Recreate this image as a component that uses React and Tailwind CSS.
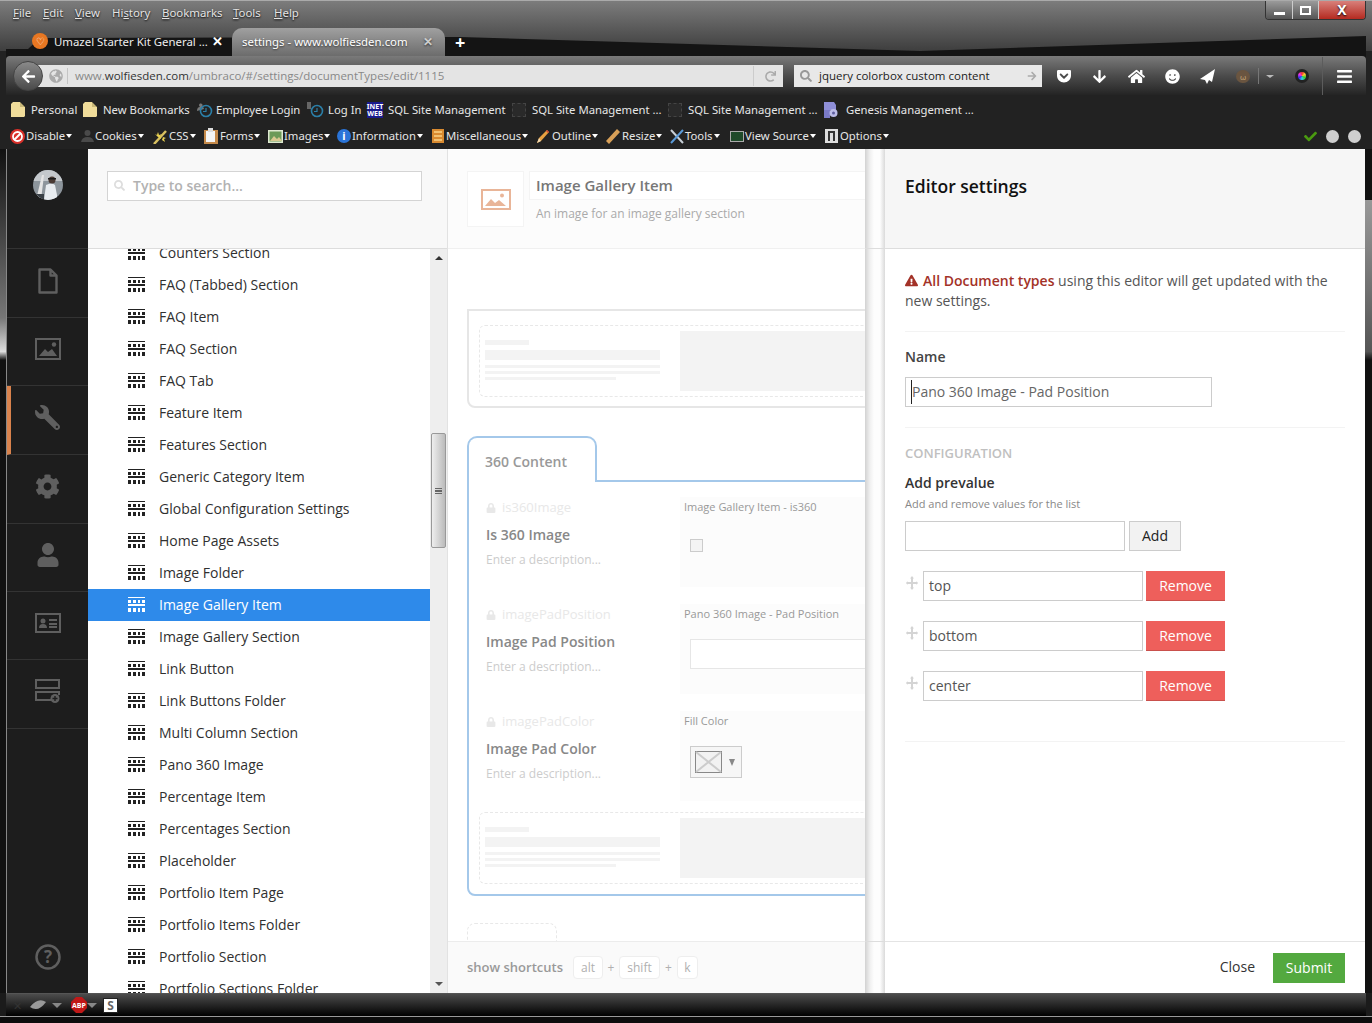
import React from 'react';
import { FaWrench, FaCog, FaUser, FaHome, FaArrowDown, FaLock, FaExclamationTriangle, FaSearch, FaGetPocket, FaSmile, FaBars, FaArrowLeft, FaRedo, FaCheck, FaArrowRight, FaGlobeAmericas } from 'react-icons/fa';

const openSans = { fontFamily: '"Open Sans", "Noto Sans", sans-serif' };
const notoSans = { fontFamily: '"Noto Sans", sans-serif' };

const menus = [
  { pre: '', key: 'F', post: 'ile', w: 'w-[30px]' },
  { pre: '', key: 'E', post: 'dit', w: 'w-[32px]' },
  { pre: '', key: 'V', post: 'iew', w: 'w-[37px]' },
  { pre: 'Hi', key: 's', post: 'tory', w: 'w-[50px]' },
  { pre: '', key: 'B', post: 'ookmarks', w: 'w-[71px]' },
  { pre: '', key: 'T', post: 'ools', w: 'w-[41px]' },
  { pre: '', key: 'H', post: 'elp', w: 'w-[30px]' },
];

const treeItems = [
  'Counters Section', 'FAQ (Tabbed) Section', 'FAQ Item', 'FAQ Section', 'FAQ Tab', 'Feature Item',
  'Features Section', 'Generic Category Item', 'Global Configuration Settings', 'Home Page Assets',
  'Image Folder', 'Image Gallery Item', 'Image Gallery Section', 'Link Button', 'Link Buttons Folder',
  'Multi Column Section', 'Pano 360 Image', 'Percentage Item', 'Percentages Section', 'Placeholder',
  'Portfolio Item Page', 'Portfolio Items Folder', 'Portfolio Section', 'Portfolio Sections Folder',
];

const Folder = () => (
  <svg width="14" height="16" viewBox="0 0 14 16">
    <path d="M0 2 L0 15 L13 15 L14 14 L14 5 L9 5 L9 0 L2 0 Z" fill="#f0dc9a" />
    <path d="M9 0 L14 5 L9 5 Z" fill="#c9b878" />
  </svg>
);

const Clock = ({ person }) => (
  <svg width="17" height="16" viewBox="0 0 17 16">
    {person && <path d="M1 9 Q1 5 4 5 Q2 3 4 1.5 Q7 1 6.500 4 L6 5 Q8 5 8 7 Z" fill="#777" />}
    {!person && <path d="M0 0h4v7H0z" fill="#666" />}
    <circle cx="10" cy="9" r="5.500" fill="none" stroke="#2b7fa8" strokeWidth="1.600" />
    <path d="M10 6v3.500H7" fill="none" stroke="#2b7fa8" strokeWidth="1.200" />
  </svg>
);

const InetIcon = () => (
  <div className="w-[16px] h-[16px] bg-[#1a1a8c] flex flex-col items-center justify-center text-white text-[7px] leading-[7px] font-bold">
    <span>INET</span>
    <span>WEB</span>
  </div>
);

const DashedIcon = () => <div className="w-[14px] h-[14px] border border-dashed border-[#444] bg-[#2a2a2a]" />;

const GenesisIcon = () => (
  <svg width="16" height="16" viewBox="0 0 16 16">
    <path d="M1 0h10l2 3v5H1z" fill="#8f8fd8" />
    <path d="M1 8h6v8H1z" fill="#7a7ac8" />
    <circle cx="10.500" cy="11" r="4" fill="#bcbce8" />
    <circle cx="10.500" cy="11" r="1.500" fill="#6060a0" />
  </svg>
);

const bookmarks = [
  { icon: <Folder />, label: 'Personal', w: 'w-[72px]', gap: 'gap-[6px]' },
  { icon: <Folder />, label: 'New Bookmarks', w: 'w-[113px]', gap: 'gap-[6px]' },
  { icon: <Clock person />, label: 'Employee Login', w: 'w-[111px]', gap: 'gap-[3px]' },
  { icon: <Clock />, label: 'Log In', w: 'w-[60px]', gap: 'gap-[4px]' },
  { icon: <InetIcon />, label: 'SQL Site Management', w: 'w-[145px]', gap: 'gap-[5px]' },
  { icon: <DashedIcon />, label: 'SQL Site Management ...', w: 'w-[156px]', gap: 'gap-[6px]' },
  { icon: <DashedIcon />, label: 'SQL Site Management ...', w: 'w-[155px]', gap: 'gap-[6px]' },
  { icon: <GenesisIcon />, label: 'Genesis Management ...', w: 'w-[170px]', gap: 'gap-[7px]' },
];

const addons = [
  {
    label: 'Disable', w: 'w-[71px]', gap: 'gap-[1px]',
    icon: (
      <svg width="15" height="15" viewBox="0 0 15 15">
        <circle cx="7.500" cy="7.500" r="7.500" fill="#d9302a" />
        <circle cx="7.500" cy="7.500" r="4.500" fill="none" stroke="#fff" strokeWidth="1.800" />
        <path d="M4 11 L11 4" stroke="#fff" strokeWidth="2" />
      </svg>
    ),
  },
  {
    label: 'Cookies', w: 'w-[72px]', gap: 'gap-[1px]',
    icon: (
      <svg width="13" height="14" viewBox="0 0 13 14">
        <circle cx="6.500" cy="4" r="3" fill="#4a4a4a" />
        <path d="M0 13 Q1 8 6.500 8 Q12 8 13 13 Z" fill="#4a4a4a" />
      </svg>
    ),
  },
  {
    label: 'CSS', w: 'w-[51px]', gap: 'gap-[1px]',
    icon: (
      <svg width="15" height="15" viewBox="0 0 15 15">
        <path d="M1 15 L13 2" stroke="#d8c060" strokeWidth="2.500" />
        <path d="M2 5l2 1 1-3 1 3 3-1-2 2 1 3-3-2zM10 8l3 1-2 1 1 3-3-2z" fill="#e8d050" />
      </svg>
    ),
  },
  {
    label: 'Forms', w: 'w-[64px]', gap: 'gap-[1px]',
    icon: (
      <svg width="15" height="16" viewBox="0 0 15 16">
        <rect x="0" y="2" width="14" height="14" fill="#c58a4a" />
        <rect x="2" y="3" width="9" height="11" fill="#f4f4f4" />
        <rect x="4" y="0" width="5" height="4" fill="#ddd" />
      </svg>
    ),
  },
  {
    label: 'Images', w: 'w-[69px]', gap: 'gap-[1px]',
    icon: (
      <svg width="15" height="13" viewBox="0 0 15 13">
        <rect width="15" height="13" fill="#dfe8d0" />
        <rect x="1.500" y="1.500" width="12" height="10" fill="#6c9a58" />
        <path d="M2 11l4-5 3 3 2-2 3 4z" fill="#d8c890" />
      </svg>
    ),
  },
  {
    label: 'Information', w: 'w-[95px]', gap: 'gap-[1px]',
    icon: (
      <div className="w-[14px] h-[14px] rounded-full bg-[#2a74d8] text-white text-[11px] leading-[14px] text-center font-bold">i</div>
    ),
  },
  {
    label: 'Miscellaneous', w: 'w-[104px]', gap: 'gap-[2px]',
    icon: (
      <svg width="12" height="14" viewBox="0 0 12 14">
        <rect width="12" height="14" fill="#d98a30" />
        <path d="M2 2h8v2H2zM2 6h8v2H2zM2 10h8v2H2z" fill="#f2c070" />
      </svg>
    ),
  },
  {
    label: 'Outline', w: 'w-[70px]', gap: 'gap-[2px]',
    icon: (
      <svg width="14" height="15" viewBox="0 0 14 15">
        <path d="M1 14 L3 9 L11 1 L13 3 L5 12 Z" fill="#e8a040" />
        <path d="M11 1 L13 3 L12 4 L10 2 Z" fill="#d04030" />
        <path d="M1 14 L3 9 L5 12 Z" fill="#f0d8b0" />
      </svg>
    ),
  },
  {
    label: 'Resize', w: 'w-[64px]', gap: 'gap-[2px]',
    icon: (
      <svg width="14" height="15" viewBox="0 0 14 15">
        <path d="M0 12 L11 0 L14 3 L3 15 Z" fill="#d8a058" />
      </svg>
    ),
  },
  {
    label: 'Tools', w: 'w-[60px]', gap: 'gap-[1px]',
    icon: (
      <svg width="14" height="15" viewBox="0 0 14 15">
        <path d="M1 1 L13 14" stroke="#c8d0d8" strokeWidth="2" />
        <path d="M13 1 L1 14" stroke="#5a9ad8" strokeWidth="2" />
      </svg>
    ),
  },
  {
    label: 'View Source', w: 'w-[95px]', gap: 'gap-[1px]',
    icon: (
      <div className="w-[14px] h-[11px] border border-[#aaa] bg-[#1f4a2a]" />
    ),
  },
  {
    label: 'Options', w: 'w-[70px]', gap: 'gap-[2px]',
    icon: (
      <svg width="13" height="14" viewBox="0 0 13 14">
        <rect width="13" height="14" fill="#ddd" />
        <path d="M3 3h2v9H3zM8 3h2v9H8zM3 2h7v2H3z" fill="#333" />
      </svg>
    ),
  },
];

const TreeIcon = ({ color }) => (
  <svg width="17" height="15" viewBox="0 0 17 15" fill={color}>
    <path d="M0 0h17v1H0zM0 3h3v3H0zM5 3h3v3H5zM10 3h2v3h-2zM14 3h3v3h-3zM0 7h17v2H0zM0 11h3v4H0zM5 11h3v4H5zM10 11h2v4h-2zM14 11h3v4h-3z" />
  </svg>
);

const sideIcons = [
  {
    h: 'h-[69px]',
    icon: (
      <svg width="20" height="26" viewBox="0 0 20 26" fill="none" stroke="#5f5f5f" strokeWidth="2.400" strokeLinejoin="round">
        <path d="M1.500 1.500h11l6 6v17h-17zM12.500 1.500v6h6" />
      </svg>
    ),
  },
  {
    h: 'h-[68px]',
    icon: (
      <svg width="26" height="22" viewBox="0 0 26 22">
        <rect x="1" y="1" width="24" height="20" fill="none" stroke="#5f5f5f" strokeWidth="2" />
        <path d="M4 18l6-7 3 3 4-3 5 7z" fill="#5f5f5f" />
        <circle cx="19" cy="6.500" r="2.200" fill="#5f5f5f" />
      </svg>
    ),
  },
  { h: 'h-[69px]', active: true, icon: <FaWrench size={25} color="#5f5f5f" className="scale-x-[-1]" /> },
  { h: 'h-[69px]', icon: <FaCog size={25} color="#5f5f5f" /> },
  { h: 'h-[68px]', icon: <FaUser size={24} color="#5f5f5f" /> },
  {
    h: 'h-[68px]',
    icon: (
      <svg width="26" height="20" viewBox="0 0 26 20">
        <rect x="1" y="1" width="24" height="18" fill="none" stroke="#5f5f5f" strokeWidth="2" />
        <circle cx="8" cy="8" r="2.500" fill="#5f5f5f" />
        <path d="M4 15q0-4 4-4t4 4zM14 6h8v2h-8zM14 10h8v2h-8zM14 13h8v2h-8z" fill="#5f5f5f" />
      </svg>
    ),
  },
  {
    h: 'h-[69px]',
    icon: (
      <svg width="26" height="25" viewBox="0 0 26 25" fill="none" stroke="#5f5f5f" strokeWidth="2">
        <rect x="1" y="1" width="23" height="8" />
        <path d="M17 21H1v-8h23v3" />
        <circle cx="20" cy="19.500" r="4.500" fill="#5f5f5f" stroke="none" />
        <path d="M20 17v5M17.500 19.500h5" stroke="#1d1d1d" strokeWidth="1.400" />
      </svg>
    ),
  },
];

const Skeleton = () => (
  <div className="flex h-[72px] w-[700px] ml-[10px] border border-dashed border-[#e8e8e8] rounded-[6px] pl-[5px] pt-[5px]">
    <div className="w-[175px] mt-[9px]">
      <div className="h-[5px] w-[44px] bg-[#f3f3f3]" />
      <div className="h-[10px] mt-[5px] bg-[#f3f3f3]" />
      <div className="h-[3px] mt-[5px] bg-[#f3f3f3]" />
      <div className="h-[3px] mt-[3px] bg-[#f3f3f3]" />
      <div className="h-[3px] mt-[3px] w-[131px] bg-[#f3f3f3]" />
    </div>
    <div className="w-[400px] h-[60px] ml-[20px] bg-[#f3f3f3]" />
  </div>
);

const props = [
  { alias: 'is360Image', label: 'Is 360 Image', editor: 'Image Gallery Item - is360', kind: 'check' },
  { alias: 'imagePadPosition', label: 'Image Pad Position', editor: 'Pano 360 Image - Pad Position', kind: 'select' },
  { alias: 'imagePadColor', label: 'Image Pad Color', editor: 'Fill Color', kind: 'color' },
];

const Arrow = ({ up }) => (
  <div className={up ? 'w-0 h-0 border-x-[4px] border-x-transparent border-b-[4px] border-b-[#333]' : 'w-0 h-0 border-x-[4px] border-x-transparent border-t-[4px] border-t-[#555]'} />
);

const Drop = () => <span className="inline-block ml-[1px] mb-[2px] w-0 h-0 border-x-[3.500px] border-x-transparent border-t-[4px] border-t-white" />;

const Move = () => (
  <svg width="12" height="14" viewBox="0 0 12 14" fill="#d4d4d4">
    <path d="M6 0l2 2.500H7V6h3.500V5L12 7l-1.500 2V8H7v3.500h1L6 14l-2-2.500h1V8H1.500v1L0 7l1.500-2v1H5V2.500H4z" />
  </svg>
);

const Avatar = () => (
  <svg width="30" height="30" viewBox="0 0 30 30">
    <defs>
      <clipPath id="avatar-clip">
        <circle cx="15" cy="15" r="15" />
      </clipPath>
    </defs>
    <g clipPath="url(#avatar-clip)">
      <rect width="30" height="30" fill="#8d959c" />
      <rect width="30" height="11" fill="#c4c8cc" />
      <path d="M3 30L9 5l2 0L8 30z" fill="#e4e4e4" />
      <path d="M11 30L13 15q6-3 9 0l3 15z" fill="#e8ecf0" />
      <circle cx="19" cy="10" r="3.500" fill="#4a3a34" />
      <path d="M15 8h8v1.500h-8z" fill="#1c1c1c" />
      <path d="M0 24h11v6H0zM24 26h6v4h-6z" fill="#3a4046" />
    </g>
  </svg>
);

const AbpIcon = () => (
  <svg width="16" height="16" viewBox="0 0 16 16">
    <polygon points="5,0 11,0 16,5 16,11 11,16 5,16 0,11 0,5" fill="#c01818" />
    <text x="8" y="10.500" textAnchor="middle" fontSize="7" fontWeight="700" fill="#fff">ABP</text>
  </svg>
);

export default function App() {
  return (
    <div className="w-[1372px] h-[1023px] overflow-hidden flex flex-col bg-[#1b1b1b] text-[12px]" style={openSans}>
      {/* browser chrome */}
      <div className="relative h-[149px] flex-none flex flex-col bg-[linear-gradient(#7c7c7c,#3e3e3e_50px,#222_50px)] border-t border-[#aaa]">
        <svg className="absolute left-0 top-0" width="1372" height="58">
          <polygon points="6,48 28,48 40,37 460,36 920,50 1366,35 1366,58 6,58" fill="#141414" />
        </svg>

        <div className="relative h-[26px] flex items-center pl-[13px] text-[#e4e4e4] text-[11.4px] [text-shadow:0_1px_2px_#000]" style={notoSans}>
          {menus.map((m) => (
            <div key={m.post} className={`${m.w} pb-[2px]`}>
              {m.pre}<span className="underline">{m.key}</span>{m.post}
            </div>
          ))}
          <div className="ml-auto mr-[6px] self-start flex h-[19px] w-[101px] border border-t-0 border-[#333] rounded-b-[4px] overflow-hidden">
            <div className="w-[27px] bg-[linear-gradient(#9a9a9a,#555)] flex items-end justify-center pb-[4px] border-r border-[#ccc]">
              <div className="w-[11px] h-[3px] bg-white" />
            </div>
            <div className="w-[26px] bg-[linear-gradient(#9a9a9a,#555)] flex items-center justify-center border-r border-[#ccc]">
              <div className="w-[11px] h-[9px] border-2 border-white" />
            </div>
            <div className="flex-1 bg-[linear-gradient(#d8807a,#b52a20)] flex items-center justify-center text-white font-bold text-[14px] leading-none">X</div>
          </div>
        </div>

        <div className="relative h-[29px] flex items-center pl-[28px] text-[11.4px]" style={notoSans}>
          <div className="w-[204px] flex items-center pl-[4px] text-[#eee]">
            <div className="w-[16px] h-[16px] rounded-full bg-[#e87722] flex items-center justify-center text-white text-[10px] leading-none">♡</div>
            <span className="ml-[6px] w-[158px] whitespace-nowrap">Umazel Starter Kit General ...</span>
            <span className="text-white text-[13px] font-bold leading-none">✕</span>
          </div>
          <div className="w-[213px] h-[28px] rounded-t-[10px] bg-[linear-gradient(#a0a0a0,#6c6c6c)] flex items-center pl-[10px] text-white [text-shadow:0_1px_2px_#333]">
            <span className="w-[181px] whitespace-nowrap">settings - www.wolfiesden.com</span>
            <span className="text-[#ccc] text-[12px] font-bold leading-none">✕</span>
          </div>
          <span className="ml-[10px] text-white text-[18px] font-bold leading-none">+</span>
        </div>

        <div className="relative h-[39px] pt-[1px] mx-[6px] rounded-tr-[4px] rounded-tl-[4px] bg-[linear-gradient(#7a7a7a,#4c4c4c_50%,#242424)] flex items-center">
          <div className="w-[30px] h-[30px] ml-[7px] rounded-full bg-[linear-gradient(#8a8a8a,#4a4a4a)] border border-[#444] flex items-center justify-center z-10">
            <FaArrowLeft size={15} color="#fff" />
          </div>
          <div className="-ml-[7px] w-[747px] h-[22px] bg-[#e4e4e4] flex items-center pl-[13px]">
            <FaGlobeAmericas size={14} color="#aaa" />
            <div className="ml-[4px] w-px h-[16px] bg-[#c4c4c4]" />
            <span className="ml-[7px] w-[678px] text-[11.5px] text-[#888] whitespace-nowrap">
              www.<span className="text-[#333]">wolfiesden.com</span>/umbraco/#/settings/documentTypes/edit/1115
            </span>
            <div className="w-px h-[20px] bg-[#ccc]" />
            <FaRedo size={11} color="#aaa" className="ml-[11px]" />
          </div>
          <div className="ml-[11px] w-[248px] h-[22px] bg-[#e8e8e8] flex items-center pl-[6px] text-[#222] text-[11.5px]">
            <FaSearch size={12} color="#999" />
            <span className="ml-[7px] w-[208px] whitespace-nowrap">jquery colorbox custom content</span>
            <FaArrowRight size={10} color="#aaa" />
          </div>
          <FaGetPocket size={16} color="#fff" className="ml-[14px]" />
          <FaArrowDown size={15} color="#fff" className="ml-[20px]" />
          <FaHome size={17} color="#fff" className="ml-[21px]" />
          <FaSmile size={15} color="#fff" className="ml-[20px]" />
          <svg width="15" height="15" viewBox="0 0 15 15" className="ml-[20px]" fill="#fff">
            <path d="M15 0 L0 10 L5 11 L7 15 L9 11 L12 13 Z" />
          </svg>
          <div className="ml-[21px] w-[14px] h-[13px] rounded-full bg-[#6a5540] text-[#c8a878] text-[8px] leading-[13px] text-center">ω</div>
          <div className="ml-[8px] w-px h-[16px] bg-[#777]" />
          <div className="ml-[7px] w-0 h-0 border-x-[4px] border-x-transparent border-t-[3px] border-t-[#bbb]" />
          <div className="ml-[21px] w-[14px] h-[14px] rounded-full bg-[conic-gradient(#e33,#fc3,#3c3,#3ce,#33e,#e3e,#e33)] border-[3px] border-[#222]" />
          <div className="ml-[13px] w-px h-[38px] bg-[#5c5c5c]" />
          <FaBars size={17} color="#fff" className="ml-[13px]" />
        </div>

        <div className="relative h-[28px] pt-[2px] flex items-center pl-[11px] text-[#e6e6e6] text-[11.3px]" style={notoSans}>
          {bookmarks.map((b, i) => (
            <div key={i} className={`flex items-center flex-none whitespace-nowrap ${b.w} ${b.gap}`}>
              {b.icon}
              <span>{b.label}</span>
            </div>
          ))}
        </div>

        <div className="relative h-[26px] flex items-center pl-[10px] text-[#e6e6e6] text-[11.3px]" style={notoSans}>
          {addons.map((a) => (
            <div key={a.label} className={`flex items-center flex-none whitespace-nowrap ${a.w} ${a.gap}`}>
              {a.icon}
              <span>{a.label}<Drop /></span>
            </div>
          ))}
          <div className="ml-auto mr-[11px] flex items-center">
            <FaCheck size={13} color="#4a9a10" />
            <div className="ml-[9px] w-[13px] h-[13px] rounded-full bg-[#cfcfcf]" />
            <div className="ml-[9px] w-[13px] h-[13px] rounded-full bg-[#cfcfcf]" />
          </div>
        </div>
      </div>

      {/* page */}
      <div className="h-[844px] flex-none flex">
        <div className="w-[7px] flex-none bg-[linear-gradient(#111,#777_20%,#ddd_24%,#111_25%)] border-r border-[#888]" />

        {/* section rail */}
        <div className="w-[81px] flex-none bg-[#1d1d1d] flex flex-col">
          <div className="h-[100px] flex-none flex justify-center pt-[21px] border-b border-[#333]">
            <Avatar />
          </div>
          {sideIcons.map((s, i) => (
            <div key={i} className={`${s.h} pb-[5px] flex-none flex items-center justify-center border-b border-[#333] ${s.active ? 'border-l-[4px] border-l-[#d9824c] pr-[4px]' : ''}`}>
              {s.icon}
            </div>
          ))}
          <div className="mt-auto pb-[23px] flex justify-center">
            <svg width="26" height="26" viewBox="0 0 26 26">
              <circle cx="13" cy="13" r="11.500" fill="none" stroke="#5f5f5f" strokeWidth="2.500" />
              <text x="13" y="19" textAnchor="middle" fontSize="17" fontWeight="700" fill="#5f5f5f">?</text>
            </svg>
          </div>
        </div>

        {/* tree */}
        <div className="w-[360px] flex-none flex flex-col bg-white border-r border-[#e2e2e2]">
          <div className="h-[100px] flex-none bg-[#f8f8f8] border-b border-[#ddd] pl-[19px] pt-[22px]">
            <div className="w-[315px] h-[30px] bg-white border border-[#d4d4d4] flex items-center pl-[5px] pb-[1px]">
              <FaSearch size={11} color="#ddd" className="ml-[1px]" />
              <span className="ml-[8px] text-[14px] font-semibold text-[#b2b2b2]">Type to search...</span>
            </div>
          </div>
          <div className="flex-1 flex min-h-0">
            <div className="w-[342px] flex-none overflow-hidden">
              <div className="-mt-[12px]">
                {treeItems.map((name) => {
                  const active = name === 'Image Gallery Item';
                  return (
                    <div key={name} className={active ? 'h-[32px] pb-[2px] flex items-center pl-[40px] bg-[#2e8aea] text-white' : 'h-[32px] pb-[2px] flex items-center pl-[40px] text-[#303030]'}>
                      <TreeIcon color={active ? '#fff' : '#222'} />
                      <span className="ml-[14px] text-[14px] whitespace-nowrap">{name}</span>
                    </div>
                  );
                })}
              </div>
            </div>
            <div className="flex-1 bg-[#eeeeee] flex flex-col items-center pt-[7px] pb-[7px]">
              <Arrow up />
              <div className="mt-[173px] w-[15px] h-[115px] rounded-[2px] border border-[#999] bg-[linear-gradient(90deg,#eee,#bbb)] flex items-center justify-center">
                <div className="w-[7px] h-[6px] border-y-[3px] border-double border-[#666]" />
              </div>
              <div className="mt-auto">
                <Arrow />
              </div>
            </div>
          </div>
        </div>

        {/* document type editor behind the overlay */}
        <div className="w-[417px] flex-none flex flex-col overflow-hidden bg-white">
          <div className="h-[100px] flex-none bg-[#fcfcfc] border-b border-[#f0f0f0] flex pl-[19px] pt-[22px]">
            <div className="w-[57px] h-[56px] flex-none bg-white border border-[#f4f4f4] flex items-center justify-center">
              <svg width="30" height="21" viewBox="0 0 30 21">
                <rect x="1" y="1" width="28" height="19" fill="none" stroke="#e9b598" strokeWidth="2" />
                <path d="M4 17l6-7 4 4 4-3 7 6z" fill="#e9b598" />
                <circle cx="21" cy="6.500" r="2" fill="#e9b598" />
              </svg>
            </div>
            <div className="ml-[5px] flex-none">
              <div className="w-[500px] h-[29px] bg-white border border-[#f4f4f4] pl-[6px] text-[15px] leading-[27px] font-semibold text-[#777]">Image Gallery Item</div>
              <div className="mt-[5px] pl-[7px] text-[12px] leading-[18px] text-[#aaa]">An image for an image gallery section</div>
            </div>
          </div>

          <div className="flex-1 min-h-0 overflow-hidden pl-[19px] pt-[60px]">
            <div className="w-[700px] h-[99px] border-2 border-[#e6e6e6] rounded-b-[8px] pt-[14px]">
              <Skeleton />
            </div>

            <div className="relative z-10 mt-[28px] -mb-[2px] w-[130px] h-[46px] bg-white border-2 border-b-0 border-[#a4c8ea] rounded-t-[10px] pl-[16px] pt-[14px] text-[14px] leading-[20px] font-semibold text-[#999]">
              360 Content
            </div>
            <div className="w-[700px] h-[416px] border-2 border-[#a4c8ea] rounded-bl-[8px] pt-[15px]">
              {props.map((p) => (
                <div key={p.alias} className="flex h-[90px] mb-[17px] pl-[17px]">
                  <div className="w-[194px] flex-none pt-[2px]">
                    <div className="flex items-center h-[18px] text-[13px] text-[#e8e8e8]">
                      <FaLock size={10} color="#e8e8e8" />
                      <span className="ml-[6px]">{p.alias}</span>
                    </div>
                    <div className="mt-[8px] text-[14px] leading-[20px] font-semibold text-[#888]">{p.label}</div>
                    <div className="mt-[6px] text-[12px] leading-[18px] text-[#ccc]">Enter a description...</div>
                  </div>
                  <div className="flex-1 pl-[4px] bg-[#fcfcfc]">
                    <div className="text-[11px] leading-[20px] text-[#999]">{p.editor}</div>
                    {p.kind === 'check' && (
                      <div className="ml-[6px] mt-[22px] w-[13px] h-[13px] border border-[#ccc] bg-[#f4f4f4]" />
                    )}
                    {p.kind === 'select' && (
                      <div className="ml-[6px] mt-[15px] w-[300px] h-[30px] border border-[#e6e6e6] bg-white" />
                    )}
                    {p.kind === 'color' && (
                      <div className="ml-[6px] mt-[15px] w-[52px] h-[32px] border border-[#ccc] bg-[#f6f6f6] flex items-center pl-[4px]">
                        <svg width="27" height="22" viewBox="0 0 27 22">
                          <rect x="0.500" y="0.500" width="26" height="21" fill="#f2f2f2" stroke="#888" />
                          <path d="M1 1L26 21M26 1L1 21" stroke="#ccc" strokeWidth="2" />
                        </svg>
                        <div className="ml-[7px] w-0 h-0 border-x-[3.500px] border-x-transparent border-t-[7px] border-t-[#888]" />
                      </div>
                    )}
                  </div>
                </div>
              ))}
              <div className="-mt-[6px]">
                <Skeleton />
              </div>
            </div>
            <div className="mt-[27px] w-[90px] h-[30px] border border-dashed border-[#e8e8e8] rounded-t-[8px]" />
          </div>

          <div className="h-[52px] flex-none bg-[#fafafa] border-t border-[#ececec] flex items-center pl-[19px] text-[#b0b0b0]">
            <span className="w-[106px] text-[13px] font-semibold text-[#999]">show shortcuts</span>
            <span className="w-[30px] h-[23px] bg-white border border-[#eee] rounded-[4px] text-center leading-[21px]">alt</span>
            <span className="w-[16px] text-center">+</span>
            <span className="w-[41px] h-[23px] bg-white border border-[#eee] rounded-[4px] text-center leading-[21px]">shift</span>
            <span className="w-[17px] text-center">+</span>
            <span className="w-[21px] h-[23px] bg-white border border-[#eee] rounded-[4px] text-center leading-[21px]">k</span>
          </div>
        </div>

        {/* overlay gutter */}
        <div className="w-[20px] flex-none flex flex-col bg-[linear-gradient(90deg,#d2d2d2,#f0f0f0_5px,#fdfdfd_9px,#fdfdfd_15px,#dadada)]">
          <div className="h-[100px] border-b border-[#ddd]" />
          <div className="flex-1" />
          <div className="h-[52px] border-t border-[#ddd]" />
        </div>

        {/* editor settings */}
        <div className="w-[480px] flex-none flex flex-col bg-white text-[14px]">
          <div className="h-[100px] flex-none bg-[#f6f6f6] border-b border-[#ddd] pl-[20px] pt-[24px]">
            <div className="text-[17.5px] leading-[26px] font-semibold text-[#111]">Editor settings</div>
          </div>
          <div className="flex-1 min-h-0 px-[20px] pt-[22px]">
            <div className="pb-[20px] leading-[20px] text-[#555] border-b border-[#f3f3f3]">
              <FaExclamationTriangle size={13} color="#a33228" className="inline mb-[3px] mr-[5px]" />
              <span className="font-semibold text-[#a33228]">All Document types</span> using this editor will get updated with the new settings.
            </div>
            <div className="mt-[15px] leading-[20px] font-semibold text-[#444]">Name</div>
            <div className="mt-[10px] w-[307px] h-[30px] border border-[#ccc] flex items-center pl-[5px] text-[#666]">
              <span className="border-l border-[#222] leading-[24px]">Pano 360 Image - Pad Position</span>
            </div>
            <div className="mt-[20px] border-t border-[#f3f3f3]" />
            <div className="mt-[15px] text-[13px] leading-[20px] font-semibold text-[#c0c0c0]">CONFIGURATION</div>
            <div className="mt-[9px] leading-[22px] font-semibold text-[#333]">Add prevalue</div>
            <div className="mt-[1px] text-[11px] leading-[18px] text-[#888]">Add and remove values for the list</div>
            <div className="mt-[8px] flex">
              <div className="w-[220px] h-[30px] border border-[#ccc]" />
              <div className="ml-[4px] w-[52px] h-[30px] border border-[#ccc] bg-[#f2f2f2] text-center leading-[28px] text-[#222]">Add</div>
            </div>
            <div className="mt-[20px] flex flex-col gap-[20px]">
              {['top', 'bottom', 'center'].map((v) => (
                <div key={v} className="flex items-start h-[30px]">
                  <div className="w-[18px] flex-none pl-[1px] pt-[5px]"><Move /></div>
                  <div className="w-[220px] h-[30px] border border-[#ccc] pl-[5px] leading-[28px] text-[#555]">{v}</div>
                  <div className="ml-[3px] w-[79px] h-[30px] bg-[#ee5f5b] border-b border-[#c9504c] text-white text-center leading-[29px]">Remove</div>
                </div>
              ))}
            </div>
            <div className="mt-[40px] border-t border-[#f3f3f3]" />
          </div>
          <div className="h-[52px] flex-none bg-white border-t border-[#e4e4e4] flex items-center justify-end pr-[20px]">
            <span className="text-[#333] pb-[2px]">Close</span>
            <div className="ml-[18px] w-[72px] h-[30px] bg-[#53a93f] text-white text-center leading-[30px]">Submit</div>
          </div>
        </div>

        <div className="flex-1 bg-[linear-gradient(#111,#111_6%,#999_6%,#555_24%,#111_25%)]" />
      </div>

      {/* status bar */}
      <div className="h-[23px] flex-none mx-[6px] border-t border-[#555] bg-[linear-gradient(#4c4c4c,#000)] flex items-center pl-[7px]">
        <span className="w-[12px] text-[#333] text-[11px] leading-none">✕</span>
        <svg width="16" height="10" viewBox="0 0 16 10" className="ml-[5px]" fill="#999">
          <path d="M0 7Q8-3 16 2Q8 13 0 7Z" />
        </svg>
        <div className="ml-[6px] w-0 h-0 border-x-[5px] border-x-transparent border-t-[5px] border-t-[#888]" />
        <div className="ml-[9px]"><AbpIcon /></div>
        <div className="w-0 h-0 border-x-[5px] border-x-transparent border-t-[5px] border-t-[#888]" />
        <div className="ml-[6px] w-[15px] h-[15px] bg-white border border-[#222] text-[#666] text-[12px] leading-[13px] text-center font-bold">S</div>
      </div>
      <div className="flex-1 bg-[#0c0c0c] border-t border-[#999]" />
    </div>
  );
}
